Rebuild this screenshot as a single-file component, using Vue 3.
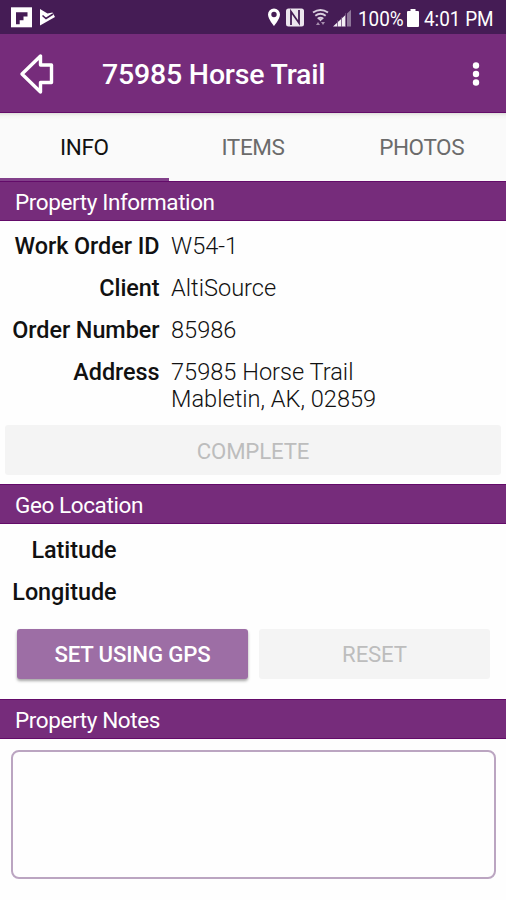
<template>
  <div class="app">
    <!-- system status bar -->
    <div class="status-bar">
      <svg class="status-left" width="56" height="34" viewBox="0 0 56 34">
        <rect x="11" y="7.3" width="21" height="20" fill="#fff" />
        <path d="M16 12.3h11.5v4.2h-4v3.8h-3.8v3.9H16z" fill="#451c55" />
        <path d="M40 9l7.500 4.500 5-1 2.500 4.500L40 25.500z" fill="#fff" />
        <path d="M42.500 15.500l3.500 3 7-4.500" fill="none" stroke="#451c55" stroke-width="1.600" />
      </svg>
      <div class="status-right">
        <svg width="88" height="34" viewBox="0 0 88 34">
          <path
            d="M9 8.500a6 6 0 0 0-6 6c0 4.400 6 11.500 6 11.500s6-7.100 6-11.500a6 6 0 0 0-6-6zm0 3.300a2.700 2.700 0 1 1 0 5.400 2.700 2.700 0 0 1 0-5.400z"
            fill="#fff"
            fill-rule="evenodd"
          />
          <rect x="21" y="8.500" width="18" height="18" rx="2.500" fill="#ece6ee" />
          <path d="M26 25V11.500l8 11.500V10" fill="none" stroke="#451c55" stroke-width="1.800" />
          <g fill="none" stroke="#d9cede" stroke-width="2">
            <path d="M48 12.500q7.500-5 15 0" />
            <path d="M50.300 15.700q5.200-3.700 10.400 0" />
            <path d="M52.700 18.700q2.800-2 5.600 0" />
          </g>
          <path d="M53.500 19h4l-2 2.500z" fill="#d9cede" />
          <path d="M51 25l2-3 2 3zM56 22h4l-2 3z" fill="#a68fae" />
          <path d="M68 26.500L81 14.500v12z" fill="#f3eff4" />
          <path d="M82 13.600l4-3.900v16.800h-4z" fill="#8f779a" />
          <path d="M72.500 20v7M76.500 17v10M80.500 13v14" stroke="#6d4a7b" stroke-width=".8" />
        </svg>
        <span class="battery-text">100%</span>
        <svg class="battery" width="12" height="18" viewBox="0 0 12 18">
          <path d="M3.500 0h5v2H11q1 0 1 1v14q0 1-1 1H1q-1 0-1-1V3q0-1 1-1h2.500z" fill="#fff" />
        </svg>
        <span class="clock">4:01 PM</span>
      </div>
    </div>

    <!-- toolbar -->
    <header class="toolbar">
      <svg class="back" width="36" height="42" viewBox="0 0 36 42">
        <path
          d="M3 21L21.500 3v9h11v17.500h-11v9.500z"
          fill="none"
          stroke="#fff"
          stroke-width="3.400"
          stroke-linejoin="round"
        />
      </svg>
      <h1>75985 Horse Trail</h1>
      <svg class="more" width="8" height="26" viewBox="0 0 8 26">
        <circle cx="4" cy="4.500" r="3.200" fill="#fff" />
        <circle cx="4" cy="13" r="3.200" fill="#fff" />
        <circle cx="4" cy="21.500" r="3.200" fill="#fff" />
      </svg>
    </header>

    <nav class="tabs">
      <button
        v-for="tab in tabs"
        :key="tab"
        :class="{ active: tab === activeTab }"
        @click="activeTab = tab"
      >
        {{ tab }}
      </button>
    </nav>

    <section>
      <h2>Property Information</h2>
      <dl class="info">
        <template v-for="row in property" :key="row.label">
          <dt>{{ row.label }}</dt>
          <dd>{{ row.value }}</dd>
        </template>
      </dl>
      <button class="btn complete" disabled>COMPLETE</button>
    </section>

    <section>
      <h2>Geo Location</h2>
      <dl class="info geo">
        <dt>Latitude</dt>
        <dd>{{ latitude }}</dd>
        <dt>Longitude</dt>
        <dd>{{ longitude }}</dd>
      </dl>
      <div class="geo-buttons">
        <button class="btn primary">SET USING GPS</button>
        <button class="btn" disabled>RESET</button>
      </div>
    </section>

    <section>
      <h2>Property Notes</h2>
      <textarea v-model="notes" class="notes"></textarea>
    </section>
  </div>
</template>

<script setup>
import { ref } from "vue";

const tabs = ["INFO", "ITEMS", "PHOTOS"];
const activeTab = ref("INFO");

const property = ref([
  { label: "Work Order ID", value: "W54-1" },
  { label: "Client", value: "AltiSource" },
  { label: "Order Number", value: "85986" },
  { label: "Address", value: "75985 Horse Trail\nMabletin, AK, 02859" },
]);

const latitude = ref("");
const longitude = ref("");
const notes = ref("");
</script>

<style>
body {
  background: #fefefe;
}
</style>

<style scoped>
.app {
  width: 506px;
  height: 900px;
  overflow: hidden;
  background: #fefefe;
  font-family: Roboto, sans-serif;
  font-size: 22.5px;
  color: #111;
}

.app * {
  box-sizing: border-box;
}

button {
  border: none;
  padding: 0;
  font-family: inherit;
}

.status-bar {
  height: 34px;
  display: flex;
  justify-content: space-between;
  background: #451c55;
  color: #fff;
}

.status-right {
  display: flex;
  align-items: center;
  padding-right: 13px;
  font-size: 21px;
  line-height: 34px;
  white-space: nowrap;
}

.battery-text,
.clock {
  padding-top: 3px;
  transform: scaleX(0.9);
  transform-origin: left;
}

.battery-text {
  margin-left: 5px;
  width: 46px;
}

.battery {
  margin: 1px 5px 0 3px;
}

.clock {
  width: 69px;
}

.toolbar {
  height: 79px;
  display: flex;
  align-items: center;
  padding: 2px 26px 0 19px;
  background: #762c7b;
  border-bottom: 1px solid #630b69;
  color: #fff;
}

h1 {
  flex: 1;
  margin: 1px 0 0 47px;
  font-size: 28.5px;
  font-weight: 500;
  letter-spacing: -0.2px;
}

.tabs {
  height: 68px;
  display: grid;
  grid-template-columns: repeat(3, 1fr);
  background: linear-gradient(#dededb, #f4f4f3 3px, #fafafa 7px);
}

.tabs button {
  padding-top: 3px;
  background: none;
  border-bottom: 3px solid transparent;
  font-size: 22.5px;
  letter-spacing: -0.4px;
  color: #6b6b6b;
}

.tabs button.active {
  color: #111;
  border-bottom-color: #82408a;
}

h2 {
  margin: 0;
  height: 39.5px;
  padding: 1px 15px 0;
  line-height: 38px;
  font-size: 22.5px;
  font-weight: 400;
  letter-spacing: -0.4px;
  color: #fff;
  background: #762c7b;
  border-top: 1px solid #630b69;
  border-bottom: 1px solid #630b69;
}

.info {
  display: grid;
  grid-template-columns: 147.5px 1fr;
  gap: 15px 11.5px;
  margin: 0;
  padding: 12px 0 11.5px 12px;
  line-height: 27.2px;
}

dt {
  text-align: right;
  font-size: 23.4px;
  font-weight: 500;
  white-space: nowrap;
  letter-spacing: -0.05px;
}

dd {
  margin: 0;
  font-size: 23.6px;
  font-weight: 300;
  white-space: pre;
}

.geo {
  grid-template-columns: 104.5px 1fr;
  padding: 13px 0 12px 12px;
}

.btn {
  height: 50px;
  padding-top: 1px;
  border-radius: 3px;
  background: #f4f4f4;
  font-size: 22.2px;
  letter-spacing: -0.15px;
  color: #bdbdbd;
}

.btn.complete {
  display: block;
  width: 496px;
  margin: 0 5px 9px;
}

.geo-buttons {
  display: grid;
  grid-template-columns: 1fr 1fr;
  gap: 11px;
  padding: 11px 16px 20.5px 17px;
}

.btn.primary {
  background: #9d6ea5;
  color: #fff;
  font-weight: 500;
  box-shadow: 0 2px 3px rgba(0, 0, 0, 0.35);
}

.notes {
  display: block;
  width: 485px;
  height: 128.5px;
  margin: 11.5px 0 0 11px;
  border: 2px solid #bba5c1;
  border-radius: 8px;
  background: #fefefe;
  font: inherit;
  resize: none;
  outline: none;
}
</style>
